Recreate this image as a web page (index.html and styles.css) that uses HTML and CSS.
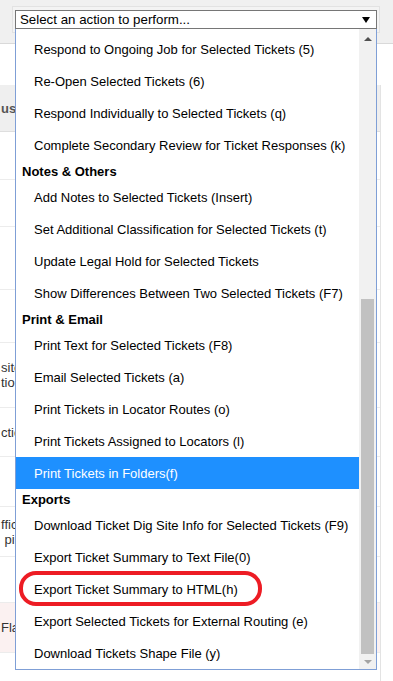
FILE: index.html
```html
<!DOCTYPE html>
<html lang="en">
<head>
    <meta charset="UTF-8">
    <meta name="viewport" content="width=device-width, initial-scale=1.0">
    <title>Ticket Actions</title>
    <link rel="stylesheet" href="styles.css">
</head>
<body>
    <div class="toolbar">
        <div class="toolbar-box">
            <div class="select">
                <span>Select an action to perform...</span>
                <svg class="select-arrow" width="8" height="6" viewBox="0 0 8 6"><polygon points="0,0 8,0 4,6" fill="#000"/></svg>
            </div>
        </div>
    </div>

    <div class="grid">
        <div class="grid-head"><span class="cell">use</span></div>
        <div class="grid-row r48"></div>
        <div class="grid-row r47"></div>
        <div class="grid-row r63"></div>
        <div class="grid-row r53"></div>
        <div class="grid-row r65"><span class="cell">site<br>tion</span></div>
        <div class="grid-row r49"><span class="cell">ctic</span></div>
        <div class="grid-row r50"></div>
        <div class="grid-row r50"><span class="cell">ffic<br>&nbsp;pip</span></div>
        <div class="grid-row r46"></div>
        <div class="grid-row r50 flagged"><span class="cell">Fla</span></div>
        <div class="grid-row r50"></div>
    </div>

    <div class="dropdown">
        <div class="options">
            <div class="option">Respond to Ongoing Job for Selected Tickets (5)</div>
            <div class="option">Re-Open Selected Tickets (6)</div>
            <div class="option">Respond Individually to Selected Tickets (q)</div>
            <div class="option">Complete Secondary Review for Ticket Responses (k)</div>
            <div class="group">Notes &amp; Others</div>
            <div class="option">Add Notes to Selected Tickets (Insert)</div>
            <div class="option">Set Additional Classification for Selected Tickets (t)</div>
            <div class="option">Update Legal Hold for Selected Tickets</div>
            <div class="option">Show Differences Between Two Selected Tickets (F7)</div>
            <div class="group">Print &amp; Email</div>
            <div class="option">Print Text for Selected Tickets (F8)</div>
            <div class="option">Email Selected Tickets (a)</div>
            <div class="option">Print Tickets in Locator Routes (o)</div>
            <div class="option">Print Tickets Assigned to Locators (l)</div>
            <div class="option selected">Print Tickets in Folders(f)</div>
            <div class="group">Exports</div>
            <div class="option">Download Ticket Dig Site Info for Selected Tickets (F9)</div>
            <div class="option">Export Ticket Summary to Text File(0)</div>
            <div class="option">Export Ticket Summary to HTML(h)</div>
            <div class="option">Export Selected Tickets for External Routing (e)</div>
            <div class="option">Download Tickets Shape File (y)</div>
        </div>
        <div class="scrollbar">
            <div class="scroll-btn up">
                <svg width="8" height="4" viewBox="0 0 8 4"><polygon points="0,4 8,4 4,0" fill="#505050"/></svg>
            </div>
            <div class="scroll-track">
                <div class="scroll-thumb"></div>
            </div>
            <div class="scroll-btn down">
                <svg width="8" height="4" viewBox="0 0 8 4"><polygon points="0,0 8,0 4,4" fill="#a3a3a3"/></svg>
            </div>
        </div>
    </div>

    <div class="mark"></div>
</body>
</html>
```

FILE: styles.css
```css
body {
    margin: 0;
    font-family: "Liberation Sans", Arial, sans-serif;
    font-size: 13px;
    color: #000;
    background: #fff;
    height: 681px;
    overflow: hidden;
    position: relative;
}

.toolbar {
    height: 44px;
    box-sizing: border-box;
    padding: 6px 0 0 12px;
    background: #f0f0f0;
    border-bottom: 1px solid #d9d9d9;
}

.toolbar-box {
    width: 368px;
    box-sizing: border-box;
    padding: 3px 2px;
    background: #f3f3f3;
    border: 1px solid #e2e2e2;
}

.select {
    height: 19px;
    box-sizing: border-box;
    display: flex;
    align-items: center;
    justify-content: space-between;
    padding: 0 6px 0 4px;
    background: #fff;
    border: 1px solid #767676;
    font-size: 13.3px;
}

.grid {
    width: 381px;
    margin-top: 41px;
    box-sizing: border-box;
    border-right: 1px solid #e3e3e3;
}

.grid-head {
    height: 47px;
    display: flex;
    align-items: center;
    background: #efefef;
    border-bottom: 1px solid #dedede;
    box-sizing: border-box;
    color: #555;
    font-weight: bold;
}

.grid-row {
    display: flex;
    align-items: center;
    border-bottom: 1px solid #ececec;
    box-sizing: border-box;
    color: #333;
}

.r46 { height: 46px; }
.r47 { height: 47px; }
.r48 { height: 48px; }
.r49 { height: 49px; }
.r50 { height: 50px; }
.r53 { height: 53px; }
.r63 { height: 63px; }
.r65 { height: 65px; }

.grid-row.flagged {
    background: #fbf1f1;
}

.cell {
    white-space: nowrap;
    line-height: 15px;
    padding-left: 1px;
}

.dropdown {
    position: absolute;
    left: 15px;
    top: 29px;
    width: 362px;
    height: 641px;
    box-sizing: border-box;
    display: flex;
    background: #fff;
    border: 1px solid #7f9fd6;
    border-top: none;
}

.options {
    flex: 1;
    overflow: hidden;
    padding-top: 4px;
}

.option {
    height: 32px;
    line-height: 34px;
    padding-left: 18px;
    white-space: nowrap;
    overflow: hidden;
}

.option.selected {
    background: #1e90ff;
    color: #fff;
}

.group {
    height: 20px;
    line-height: 22px;
    padding-left: 6px;
    font-weight: bold;
    white-space: nowrap;
    overflow: hidden;
}

.scrollbar {
    width: 17px;
    display: flex;
    flex-direction: column;
    background: #f1f1f1;
}

.scroll-btn {
    display: flex;
    align-items: center;
    justify-content: center;
}

.scroll-btn.up { height: 20px; }
.scroll-btn.down { height: 15px; }

.scroll-track {
    flex: 1;
    display: flex;
    flex-direction: column;
    justify-content: flex-end;
    padding: 0 2px;
}

.scroll-thumb {
    height: 355px;
    background: #c1c1c1;
}

.mark {
    position: absolute;
    left: 19px;
    top: 571px;
    width: 243px;
    height: 35px;
    box-sizing: border-box;
    border: 4px solid #ed1c24;
    border-radius: 17px;
}
```
